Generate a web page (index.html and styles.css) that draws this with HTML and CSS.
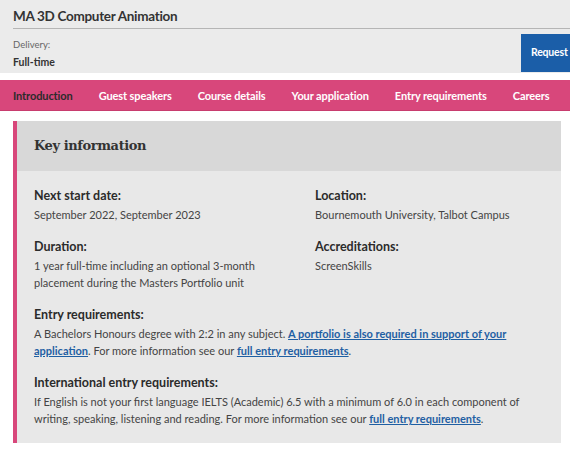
FILE: index.html
```html
<!DOCTYPE html>
<html lang="en">
<head>
    <meta charset="UTF-8">
    <meta name="viewport" content="width=device-width, initial-scale=1">
    <title>MA 3D Computer Animation</title>
    <link rel="stylesheet" href="styles.css">
</head>
<body>
    <header class="course-header">
        <h1 class="course-title">MA 3D Computer Animation</h1>
        <div class="course-meta">
            <div class="delivery">
                <span class="delivery-label">Delivery:</span>
                <span class="delivery-value">Full-time</span>
            </div>
            <a class="request-btn" href="#">Request</a>
        </div>
    </header>

    <!-- section navigation -->
    <nav class="course-nav">
        <a href="#" class="active">Introduction</a>
        <a href="#">Guest speakers</a>
        <a href="#">Course details</a>
        <a href="#">Your application</a>
        <a href="#">Entry requirements</a>
        <a href="#">Careers</a>
    </nav>

    <main>
        <section class="key-info">
            <h2 class="key-info-title">Key information</h2>
            <div class="key-info-body">
                <div class="info-grid">
                    <div class="info-item">
                        <h3>Next start date:</h3>
                        <p>September 2022, September 2023</p>
                    </div>
                    <div class="info-item">
                        <h3>Location:</h3>
                        <p>Bournemouth University, Talbot Campus</p>
                    </div>
                    <div class="info-item">
                        <h3>Duration:</h3>
                        <p>1 year full-time including an optional 3-month placement during the Masters Portfolio unit</p>
                    </div>
                    <div class="info-item">
                        <h3>Accreditations:</h3>
                        <p>ScreenSkills</p>
                    </div>
                </div>
                <div class="info-item">
                    <h3>Entry requirements:</h3>
                    <p>A Bachelors Honours degree with 2:2 in any subject. <a href="#">A portfolio is also required in support of your application</a>. For more information see our <a href="#">full entry requirements</a>.</p>
                </div>
                <div class="info-item">
                    <h3>International entry requirements:</h3>
                    <p>If English is not your first language IELTS (Academic) 6.5 with a minimum of 6.0 in each component of writing, speaking, listening and reading. For more information see our <a href="#">full entry requirements</a>.</p>
                </div>
            </div>
        </section>
    </main>
</body>
</html>
```

FILE: styles.css
```css
body {
    font-family: Lato, "Noto Sans", sans-serif;
    font-size: 11px;
    color: #333;
    margin: 0;
    padding: 0;
    background-color: #fff;
    overflow-x: hidden;
}

.course-header {
    background-color: #ebebeb;
    padding: 8px 0 0 13px;
    height: 73px;
    box-sizing: border-box;
}

.course-title {
    font-size: 13.5px;
    font-weight: bold;
    letter-spacing: -0.3px;
    color: #333;
    margin: 0;
    padding-bottom: 4px;
    border-bottom: 1px solid #b5b5b5;
}

.course-meta {
    display: flex;
    justify-content: space-between;
    align-items: flex-start;
    padding-top: 5px;
}

.delivery {
    display: flex;
    flex-direction: column;
    gap: 6px;
    padding-top: 5px;
}

.delivery-label {
    font-size: 9.5px;
    color: #666;
}

.delivery-value {
    font-size: 10.5px;
    font-weight: bold;
}

.request-btn {
    background-color: #1b5ea8;
    color: white;
    font-weight: bold;
    font-size: 10.5px;
    letter-spacing: -0.2px;
    text-decoration: none;
    width: 49px;
    height: 38px;
    box-sizing: border-box;
    padding: 12px 0 0 10px;
    white-space: nowrap;
}

.course-nav {
    background-color: #d8477b;
    height: 30px;
    margin-top: 7px;
    display: flex;
    align-items: center;
    padding-left: 13px;
    border-bottom: 1px solid #c83c6e;
}

.course-nav a {
    color: white;
    font-weight: bold;
    font-size: 11px;
    letter-spacing: -0.1px;
    text-decoration: none;
    margin-right: 26px;
    white-space: nowrap;
}

.course-nav a.active {
    color: #2b2b2b;
}

main {
    padding: 10px 9px 0 13px;
}

.key-info {
    border-left: 4px solid #d8477b;
    background-color: #e8e8e8;
}

.key-info-title {
    font-family: "DejaVu Serif", "Liberation Serif", serif;
    font-size: 13px;
    font-weight: bold;
    color: #333;
    background-color: #d8d8d8;
    margin: 0;
    height: 50px;
    line-height: 50px;
    padding-left: 17px;
    letter-spacing: -0.4px;
}

.key-info-body {
    padding: 17px 17px 16px;
}

.info-grid {
    display: grid;
    grid-template-columns: 281px 1fr;
}

.info-item {
    margin-bottom: 16px;
}

.key-info-body > .info-item:last-child {
    margin-bottom: 0;
}

.info-item h3 {
    font-size: 12.5px;
    font-weight: bold;
    color: #2b2b2b;
    margin: 0 0 3px;
}

.info-item p {
    margin: 0;
    line-height: 17px;
    color: #444;
    padding-right: 10px;
}

.info-item a {
    color: #1f5fa3;
    font-weight: bold;
}
```
